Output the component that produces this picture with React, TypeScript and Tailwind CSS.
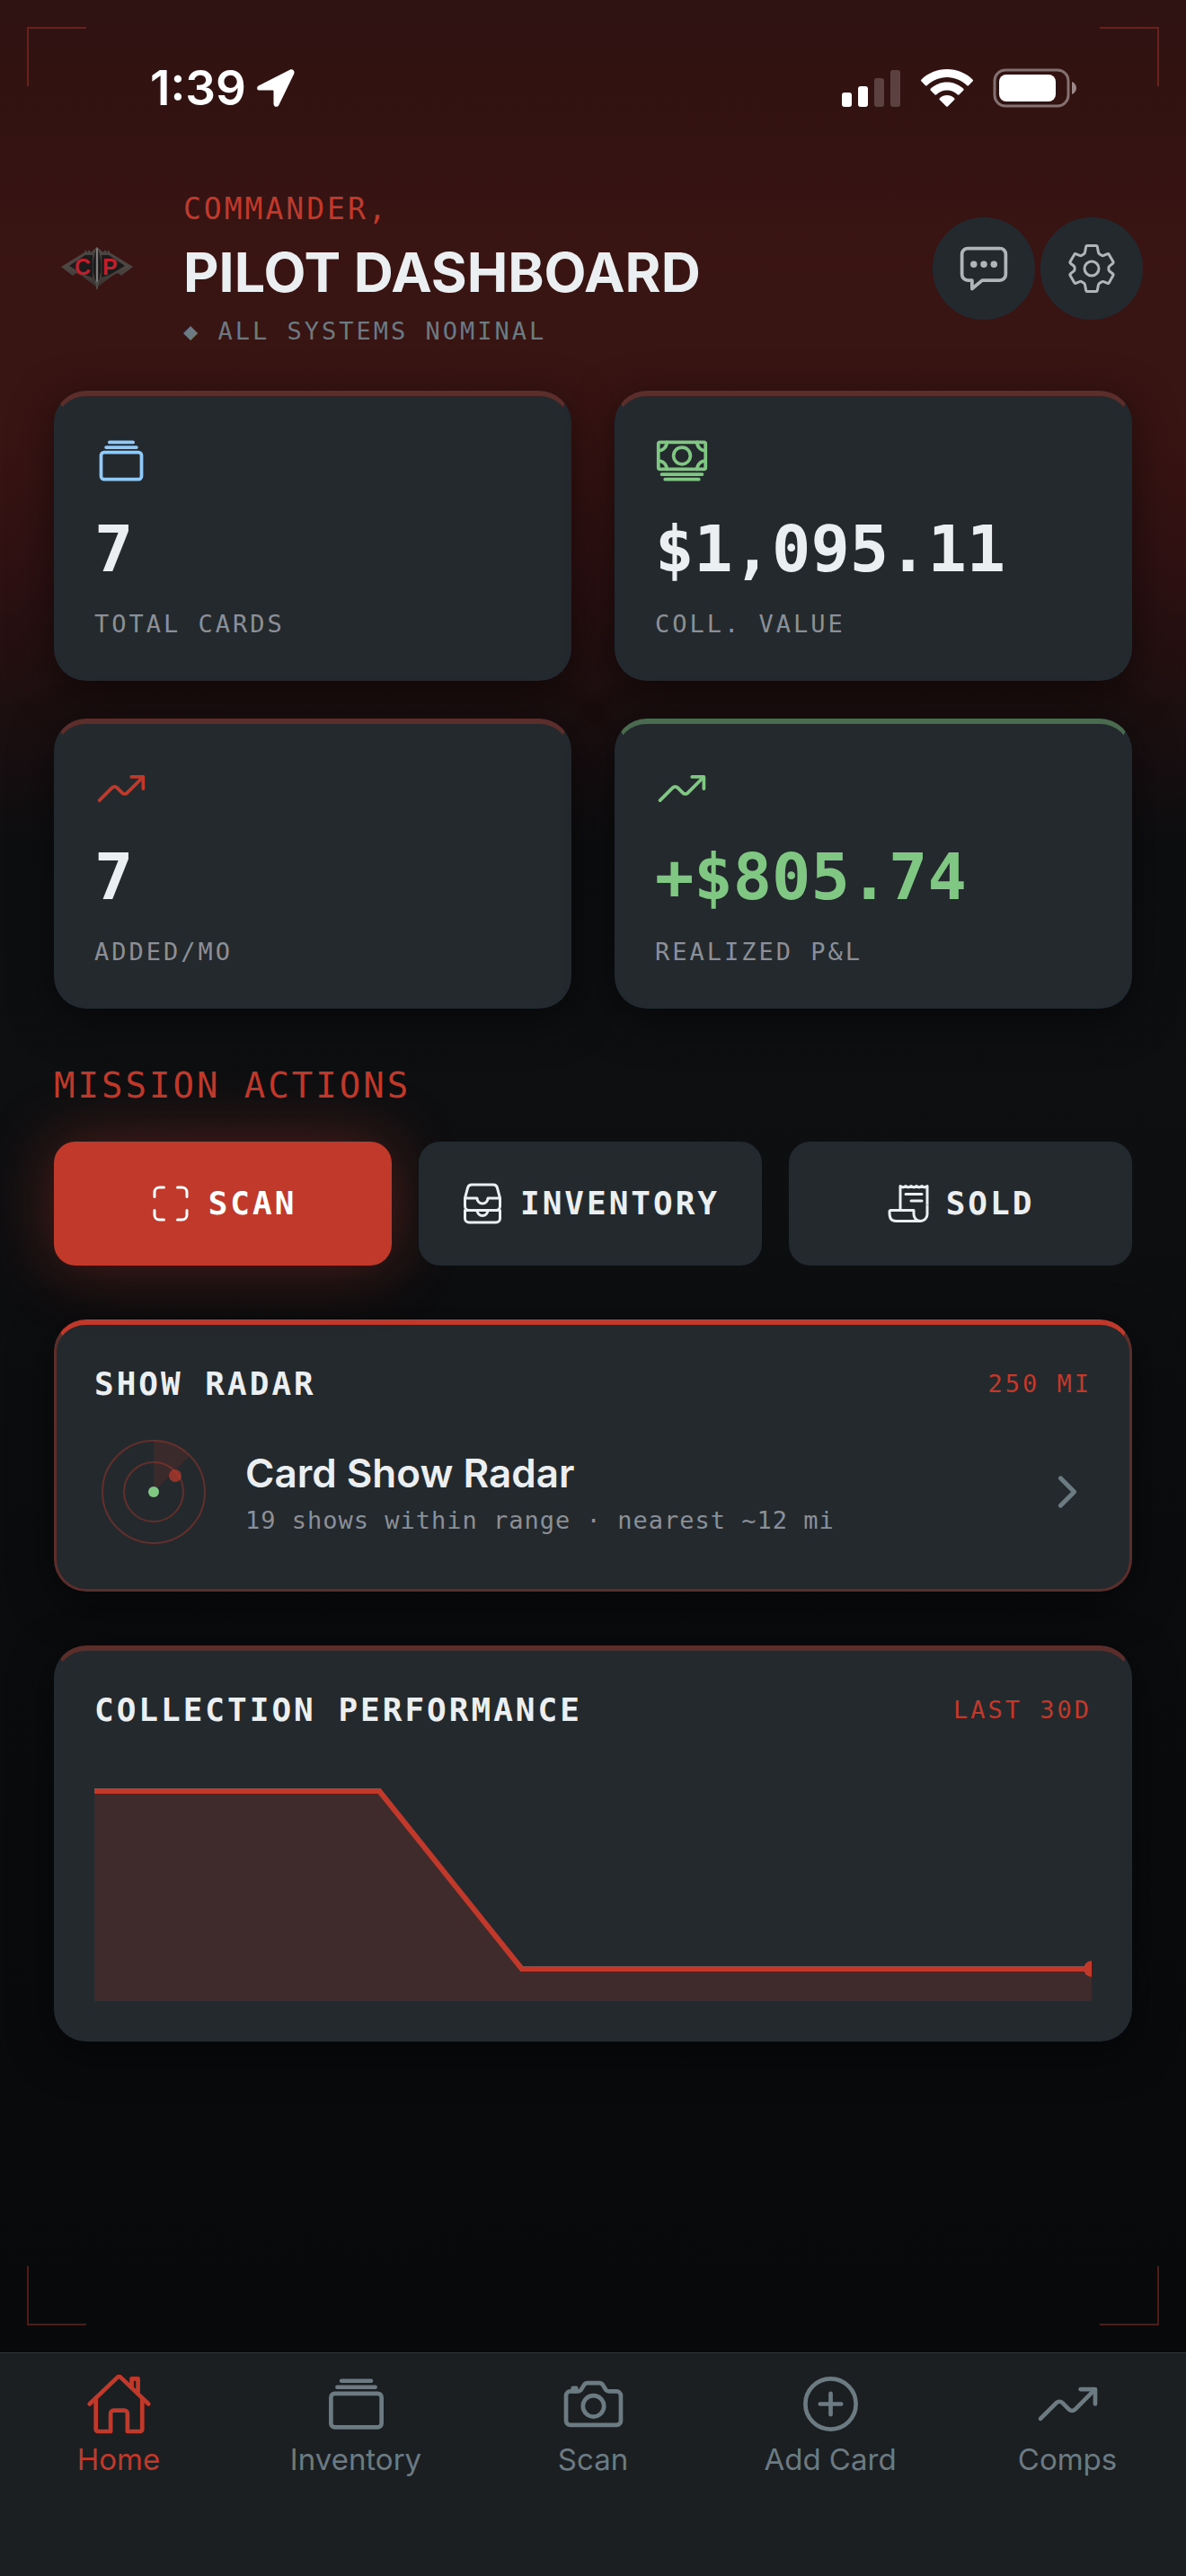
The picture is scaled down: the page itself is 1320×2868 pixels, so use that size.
import type { IconType } from "react-icons";
import {
  IoAddCircleOutline,
  IoAlbumsOutline,
  IoCameraOutline,
  IoCashOutline,
  IoChatboxEllipsesOutline,
  IoChevronForwardOutline,
  IoFileTrayStackedOutline,
  IoHomeOutline,
  IoReceiptOutline,
  IoScanOutline,
  IoTrendingUpOutline,
} from "react-icons/io5";

const STATS = [
  { label: "TOTAL CARDS", value: "7", icon: IoAlbumsOutline, iconColor: "text-[#90caf9]", valueColor: "text-[#eceff1]", top: "border-t-[#5c2e2b]" },
  { label: "COLL. VALUE", value: "$1,095.11", icon: IoCashOutline, iconColor: "text-[#81c784]", valueColor: "text-[#eceff1]", top: "border-t-[#5c2e2b]" },
  { label: "ADDED/MO", value: "7", icon: IoTrendingUpOutline, iconColor: "text-[#c0392b]", valueColor: "text-[#eceff1]", top: "border-t-[#5c2e2b]" },
  { label: "REALIZED P&L", value: "+$805.74", icon: IoTrendingUpOutline, iconColor: "text-[#81c784]", valueColor: "text-[#81c784]", top: "border-t-[#4a6b50]" },
];

const TABS = [
  { label: "Home", icon: IoHomeOutline, active: true },
  { label: "Inventory", icon: IoAlbumsOutline, active: false },
  { label: "Scan", icon: IoCameraOutline, active: false },
  { label: "Add Card", icon: IoAddCircleOutline, active: false },
  { label: "Comps", icon: IoTrendingUpOutline, active: false },
];

// one value per sample, 0..1 of the plotted range
const HISTORY = [1, 1, 1, 0, 0, 0, 0, 0];

function StatusBar() {
  return (
    <div className="flex items-center justify-between pt-[66px] pl-[167px] pr-[120px] text-white">
      <div className="flex items-center gap-3">
        <span className="text-[53px] leading-[64px] font-semibold">1:39</span>
        <svg width="42" height="42" viewBox="0 0 42 42" fill="currentColor" aria-hidden="true">
          <path d="M36.5.8 2.2 18.2C-.9 19.8-.4 23.600 3 23.600h14.200c.8 0 1.300.5 1.300 1.300v13.600c0 3.700 4.400 4.700 6 1.200L41.200 5.200C42.500 2.200 39.800-.9 36.500.8z" />
        </svg>
      </div>
      <div className="flex items-center gap-[22px]">
        <svg width="66" height="42" viewBox="0 0 66 42" fill="currentColor" aria-hidden="true">
          <rect x="0" y="26" width="11" height="16" rx="3" />
          <rect x="18" y="19" width="11" height="23" rx="3" />
          <rect x="36" y="10" width="11" height="32" rx="3" opacity="0.2" />
          <rect x="54" y="1" width="11" height="41" rx="3" opacity="0.2" />
        </svg>
        <svg width="58" height="42" viewBox="0 0 58 42" fill="currentColor" aria-hidden="true">
          <path d="M29 0C18 0 8 4.300.600 11.400c-.8.8-.8 1.500-.1 2.200l4.300 4.400c.7.7 1.400.7 2.100 0C12.800 12.500 20.500 9 29 9s16.200 3.500 22.100 9c.7.7 1.400.7 2.100 0l4.300-4.400c.7-.7.7-1.400-.1-2.200C50 4.300 40 0 29 0z" />
          <path d="M29 14.500c-7 0-13.300 2.700-18 7.100-.8.8-.8 1.500-.1 2.200l4.400 4.400c.7.7 1.400.6 2.100 0 3.100-2.800 7.100-4.600 11.600-4.600s8.500 1.800 11.600 4.600c.7.6 1.400.7 2.100 0l4.400-4.400c.7-.7.7-1.400-.1-2.200-4.700-4.400-11-7.100-18-7.100z" />
          <path d="M29 29c-3 0-5.800 1.200-7.900 3-.8.7-.8 1.500-.1 2.200l7 7c.7.7 1.300.7 2 0l7-7c.7-.7.7-1.500-.1-2.200-2.100-1.800-4.900-3-7.900-3z" />
        </svg>
        <svg width="95" height="44" viewBox="0 0 95 44" fill="none" aria-hidden="true">
          <rect x="2" y="2" width="82" height="40" rx="12" stroke="currentColor" strokeWidth="3" opacity="0.4" />
          <rect x="7" y="7" width="63" height="30" rx="8" fill="currentColor" />
          <path d="M88 15v14c3-1 5-4 5-7s-2-6-5-7z" fill="currentColor" opacity="0.5" />
        </svg>
      </div>
    </div>
  );
}

function Emblem() {
  return (
    <svg className="h-12 w-20" viewBox="0 0 80 48" role="img" aria-label="Card Pilot">
      <defs>
        <linearGradient id="hull" x1="0" y1="0" x2="0" y2="1">
          <stop offset="0" stopColor="#4a4542" />
          <stop offset="0.5" stopColor="#4d4643" />
          <stop offset="1" stopColor="#37302e" />
        </linearGradient>
        <linearGradient id="blade" x1="0" y1="0" x2="1" y2="0">
          <stop offset="0" stopColor="#0c0c0c" />
          <stop offset="0.35" stopColor="#2a2828" />
          <stop offset="0.5" stopColor="#b9b4b0" />
          <stop offset="0.65" stopColor="#2a2828" />
          <stop offset="1" stopColor="#0c0c0c" />
        </linearGradient>
      </defs>
      <path d="M0 22 26 6l1-3 2 3 2-3 2 3 7-6 7 6 2-3 2 3 2-3 1 3 26 16-13 10-4-3-6 3-17 13L23 32l-6-3-4 3z" fill="url(#hull)" />
      <path d="M9 21 27 9h8v25l-9-3z" fill="#1c1a1a" />
      <path d="M71 21 53 9h-8v25l9-3z" fill="#1c1a1a" />
      <g fill="#c01f2b" fontFamily="Liberation Sans, sans-serif" fontWeight="700" fontSize="25">
        <text x="15" y="31">C</text>
        <text x="46" y="31">P</text>
      </g>
      <path d="M40 0c3 7 5 14 4 28l-4 20-4-20C35 14 37 7 40 0z" fill="url(#blade)" />
      <path d="m37 36 3 3 3-3-3 12z" fill="#4d4a4a" />
    </svg>
  );
}

function CogIcon() {
  return (
    <svg className="size-[60px]" viewBox="0 0 60 60" fill="none" stroke="currentColor" strokeWidth="3" strokeLinejoin="round" aria-hidden="true">
      <path d="M25 4.500h10q1 0 1.300 1.200L37.500 12q.3 1.500 1.500 2l2 1.200q1.200.8 2.500.2l4.200-1.700q1-.4 1.500.5l4.800 8.300q.5.900-.3 1.600l-3.700 3q-1.200.9-1.100 2.200v1.400q0 1.400 1.100 2.300l3.700 3q.8.700.3 1.600l-4.800 8.300q-.5.900-1.500.5l-4.200-1.700q-1.300-.6-2.500.2l-2 1.200q-1.200.5-1.500 2l-1.200 6.200q-.3 1.200-1.300 1.200H25q-1 0-1.300-1.200L22.500 48q-.3-1.500-1.500-2l-2-1.200q-1.200-.8-2.500-.2l-4.200 1.700q-1 .4-1.500-.5L6 37.500q-.5-.9.300-1.600l3.700-3q1.200-.9 1.100-2.300v-1.400q0-1.300-1.100-2.200l-3.700-3q-.8-.7-.3-1.600l4.800-8.200q.5-.9 1.500-.5l4.200 1.700q1.300.6 2.500-.2l2-1.200q1.200-.5 1.500-2l1.200-6.300Q24 4.500 25 4.500z" />
      <circle cx="30" cy="30" r="8" />
    </svg>
  );
}

function StatCard({ label, value, icon: Icon, iconColor, valueColor, top }: { label: string; value: string; icon: IconType; iconColor: string; valueColor: string; top: string }) {
  return (
    <div className={`flex flex-col gap-6 rounded-[36px] border-[3px] border-t-[6px] border-[#222a30] ${top} bg-[#24292d] px-[42px] pt-[42px] pb-11 shadow-[0_12px_48px_rgba(0,0,0,0.5)]`}>
      <Icon className={`size-[60px] ${iconColor}`} />
      <div className={`font-['DejaVu_Sans_Mono',monospace] text-[72px] leading-[88px] font-bold ${valueColor}`}>{value}</div>
      <div className="font-['DejaVu_Sans_Mono',monospace] text-[27px] leading-[32px] tracking-[3px] text-[#8b9098]">{label}</div>
    </div>
  );
}

function CardHeading({ title, note }: { title: string; note: string }) {
  return (
    <div className="mb-[30px] flex items-center justify-between font-['DejaVu_Sans_Mono',monospace]">
      <h2 className="text-[36px] leading-[48px] font-bold tracking-[3px] text-[#eceff1]">{title}</h2>
      <span className="text-[27px] leading-[36px] tracking-[3px] text-[#c0392b]">{note}</span>
    </div>
  );
}

function RadarScope() {
  return (
    <svg className="size-[132px] shrink-0" viewBox="0 0 132 132" fill="none" aria-hidden="true">
      <path d="M66 66V9a57 57 0 0 1 40 17z" fill="#c0392b" opacity="0.15" />
      <circle cx="66" cy="66" r="57" stroke="#c0392b" strokeWidth="2" opacity="0.4" />
      <circle cx="66" cy="66" r="33" stroke="#c0392b" strokeWidth="2" opacity="0.4" />
      <circle cx="90" cy="48" r="7" fill="#c0392b" opacity="0.7" />
      <circle cx="66" cy="66" r="6" fill="#81c784" />
    </svg>
  );
}

function PerformanceChart({ history }: { history: number[] }) {
  const width = 1110;
  const height = 270;
  const pad = 36;
  const points = history.map((v, i) => [(i * width) / (history.length - 1), height - pad - v * (height - pad * 2)]);
  const line = points.map((p) => p.join(",")).join(" ");
  const [endX, endY] = points[points.length - 1];

  return (
    <svg className="block w-full" viewBox={`0 0 ${width} ${height}`} fill="none" role="img" aria-label="Collection value over the last 30 days">
      <polygon points={`0,${height} ${line} ${width},${height}`} fill="#c0392b" opacity="0.18" />
      <polyline points={line} stroke="#c0392b" strokeWidth="6" />
      <circle cx={endX} cy={endY} r="9" fill="#c0392b" />
    </svg>
  );
}

export default function App() {
  return (
    <div className="flex min-h-screen flex-col bg-[#07090b] font-['Inter',sans-serif]">
      <div className="relative flex-1 bg-[linear-gradient(to_bottom,#2e1211_0%,#391413_11%,#381413_19%,#2f1112_24%,#1d0f10_30%,#0d0e10_36%,#0e0f11_46%,#0b0c0e_65%,#07090b_100%)]">
        <div className="pointer-events-none absolute top-[30px] left-[30px] size-[66px] border-t-2 border-l-2 border-[#c0392b]/40" />
        <div className="pointer-events-none absolute top-[30px] right-[30px] size-[66px] border-t-2 border-r-2 border-[#c0392b]/40" />
        <div className="pointer-events-none absolute bottom-[30px] left-[30px] size-[66px] border-b-2 border-l-2 border-[#c0392b]/40" />
        <div className="pointer-events-none absolute right-[30px] bottom-[30px] size-[66px] border-r-2 border-b-2 border-[#c0392b]/40" />

        <StatusBar />

        <header className="flex items-center gap-12 pt-[81px] pr-12 pl-[60px]">
          <div className="flex w-24 justify-center">
            <Emblem />
          </div>
          <div className="flex-1">
            <div className="font-['DejaVu_Sans_Mono',monospace] text-[33px] leading-[44px] tracking-[3px] text-[#c0392b]">COMMANDER,</div>
            <h1 className="my-1.5 text-[61px] leading-[84px] font-bold text-[#eceff1]">PILOT DASHBOARD</h1>
            <div className="font-['DejaVu_Sans_Mono',monospace] text-[27px] leading-[36px] tracking-[3px] text-[#6c7a82]">◆ ALL SYSTEMS NOMINAL</div>
          </div>
          <div className="flex gap-1.5">
            <button aria-label="Messages" className="flex size-[114px] items-center justify-center rounded-full border-[3px] border-[#222a30] bg-[#24292d] text-[#b0b5b9]">
              <IoChatboxEllipsesOutline className="size-[60px]" />
            </button>
            <button aria-label="Settings" className="flex size-[114px] items-center justify-center rounded-full border-[3px] border-[#222a30] bg-[#24292d] text-[#b0b5b9]">
              <CogIcon />
            </button>
          </div>
        </header>

        <main className="px-[60px] pt-12">
          <section className="grid grid-cols-2 gap-x-12 gap-y-[42px]">
            {STATS.map((stat) => (
              <StatCard key={stat.label} {...stat} />
            ))}
          </section>

          <h2 className="mt-[60px] mb-9 font-['DejaVu_Sans_Mono',monospace] text-[39px] leading-[52px] tracking-[3px] text-[#c0392b]">MISSION ACTIONS</h2>

          <div className="flex h-[138px] gap-[30px] font-['DejaVu_Sans_Mono',monospace] text-[36px] leading-[48px] font-bold tracking-[3px] text-[#eceff1]">
            <button className="flex flex-1 items-center justify-center gap-[18px] rounded-[24px] bg-[#c0392b] text-white shadow-[0_0_72px_rgba(192,57,43,0.4)]">
              <IoScanOutline className="size-12" />
              SCAN
            </button>
            <button className="flex flex-1 items-center justify-center gap-[18px] rounded-[24px] border-[3px] border-[#222a30] bg-[#24292d]">
              <IoFileTrayStackedOutline className="size-12" />
              INVENTORY
            </button>
            <button className="flex flex-1 items-center justify-center gap-[18px] rounded-[24px] border-[3px] border-[#222a30] bg-[#24292d]">
              <IoReceiptOutline className="size-12" />
              SOLD
            </button>
          </div>

          <section className="mt-[60px] rounded-[36px] border-[3px] border-t-[6px] border-[#5c2e2b] border-t-[#c0392b] bg-[#24292d] p-[42px] shadow-[0_12px_48px_rgba(0,0,0,0.5)]">
            <CardHeading title="SHOW RADAR" note="250 MI" />
            <a href="#radar" className="flex items-center gap-9">
              <RadarScope />
              <div className="flex-1">
                <div className="mb-1.5 text-[44px] leading-[57px] font-semibold text-[#eceff1]">Card Show Radar</div>
                <div className="font-['DejaVu_Sans_Mono',monospace] text-[27px] leading-[36px] tracking-[1px] text-[#8b9098]">19 shows within range · nearest ~12 mi</div>
              </div>
              <IoChevronForwardOutline className="size-[54px] text-[#6c7a82]" />
            </a>
          </section>

          <section className="mt-[60px] rounded-[36px] border-[3px] border-t-[6px] border-[#222a30] border-t-[#5c2e2b] bg-[#24292d] p-[42px] shadow-[0_12px_48px_rgba(0,0,0,0.5)]">
            <CardHeading title="COLLECTION PERFORMANCE" note="LAST 30D" />
            <PerformanceChart history={HISTORY} />
          </section>
        </main>
      </div>

      <nav className="flex border-t border-[#30363a] bg-[#1b1f22] pt-[19px] pb-[109px]">
        {TABS.map(({ label, icon: Icon, active }) => (
          <a key={label} href={`#${label.toLowerCase().replace(" ", "-")}`} aria-current={active ? "page" : undefined} className={`flex flex-1 flex-col items-center gap-1 ${active ? "text-[#c0392b]" : "text-[#6c7a82]"}`}>
            <Icon className="size-[75px]" />
            <span className="text-[33px] leading-[41px]">{label}</span>
          </a>
        ))}
      </nav>
    </div>
  );
}
